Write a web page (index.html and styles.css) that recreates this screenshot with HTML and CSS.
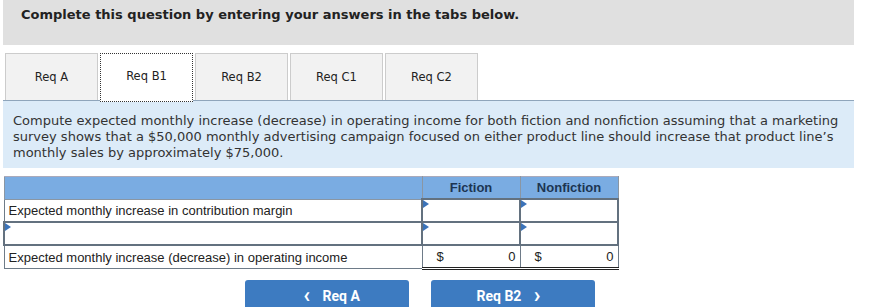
FILE: index.html
```html
<!DOCTYPE html>
<html lang="en">
<head>
    <meta charset="UTF-8">
    <title>Req B1</title>
    <link rel="stylesheet" href="styles.css">
</head>
<body>
    <div class="banner">Complete this question by entering your answers in the tabs below.</div>

    <div class="tabs">
        <button class="tab">Req A</button>
        <button class="tab active">Req B1</button>
        <button class="tab">Req B2</button>
        <button class="tab">Req C1</button>
        <button class="tab">Req C2</button>
    </div>

    <div class="prompt">
        Compute expected monthly increase (decrease) in operating income for both fiction and nonfiction assuming that a marketing
        survey shows that a $50,000 monthly advertising campaign focused on either product line should increase that product line&rsquo;s
        monthly sales by approximately $75,000.
    </div>

    <table class="grid">
        <thead>
            <tr>
                <th class="label"></th>
                <th>Fiction</th>
                <th>Nonfiction</th>
            </tr>
        </thead>
        <tbody>
            <tr>
                <td class="label">Expected monthly increase in contribution margin</td>
                <td class="entry"><span class="mark"></span></td>
                <td class="entry"><span class="mark"></span></td>
            </tr>
            <tr>
                <td class="label entry"><span class="mark"></span></td>
                <td class="entry"><span class="mark"></span></td>
                <td class="entry"><span class="mark"></span></td>
            </tr>
            <tr>
                <td class="label">Expected monthly increase (decrease) in operating income</td>
                <td class="total"><span>$</span><span>0</span></td>
                <td class="total"><span>$</span><span>0</span></td>
            </tr>
        </tbody>
    </table>

    <div class="nav">
        <button class="navbtn"><span class="chev">&lsaquo;</span> Req A</button>
        <button class="navbtn">Req B2 <span class="chev">&rsaquo;</span></button>
    </div>
</body>
</html>
```

FILE: styles.css
```css
body {
    margin: 0;
    padding: 0 18px 0 3px;
    font-family: "DejaVu Sans", Verdana, sans-serif;
    color: #222;
    background: #fff;
}

.banner {
    background: #e0e0e0;
    height: 45px;
    padding: 7px 18px 0;
    box-sizing: border-box;
    font-size: 13px;
    font-weight: bold;
}

.tabs {
    display: flex;
    gap: 2px;
    margin: 8px 0 0 2px;
    position: relative;
    z-index: 1;
}

.tab {
    width: 93px;
    height: 47px;
    background: #f2f2f2;
    border: 1px solid #ccc;
    border-bottom: none;
    font-family: "DejaVu Sans", Verdana, sans-serif;
    font-size: 11.5px;
    color: #222;
    padding: 0 0 1px;
}

.tab.active {
    background: #fff;
    border: 1px dotted #333;
    height: 49px;
    margin-bottom: -2px;
    padding-bottom: 3px;
}

.prompt {
    background: #dcebf8;
    border-top: 1px solid #8fa5bb;
    height: 68px;
    box-sizing: border-box;
    padding: 12px 10px 0;
    font-size: 13px;
    line-height: 16px;
    color: #333;
}

.grid {
    border-collapse: collapse;
    margin-top: 8px;
    font-family: "Liberation Sans", Arial, sans-serif;
    font-size: 13px;
    color: #222;
}

.grid th {
    background: #7aace2;
    height: 21px;
    width: 97px;
    padding: 0;
    border: 1px solid #8a96a3;
    border-top-color: #aab;
    color: #1c3552;
    font-size: 13px;
    font-weight: bold;
    text-align: center;
}

.grid th.label {
    width: 417px;
}

.grid td {
    height: 21px;
    padding: 0 4px;
    border: 1px solid #6e7b88;
    position: relative;
}

.grid td.entry {
    border: 2px solid #63717f;
}

.mark {
    position: absolute;
    left: 0;
    top: 0;
    width: 0;
    height: 0;
    border-top: 4px solid transparent;
    border-bottom: 4px solid transparent;
    border-left: 6px solid #3b73b9;
}

.grid td.total {
    border-bottom: 3px double #222;
}

.total span:last-child {
    float: right;
}

.total span:first-child {
    margin-left: 10px;
}

.nav {
    display: flex;
    gap: 22px;
    margin: 10px 0 0 242px;
}

.navbtn {
    width: 164px;
    height: 34px;
    background: #3d7bc1;
    border: none;
    border-radius: 3px 3px 0 0;
    color: #fff;
    font-family: Roboto, "Liberation Sans", sans-serif;
    font-size: 14px;
    font-weight: bold;
    padding: 0 0 8px;
}

.chev {
    font-size: 22px;
    font-weight: bold;
    margin: 0 9px;
    position: relative;
    top: 1px;
}
```
